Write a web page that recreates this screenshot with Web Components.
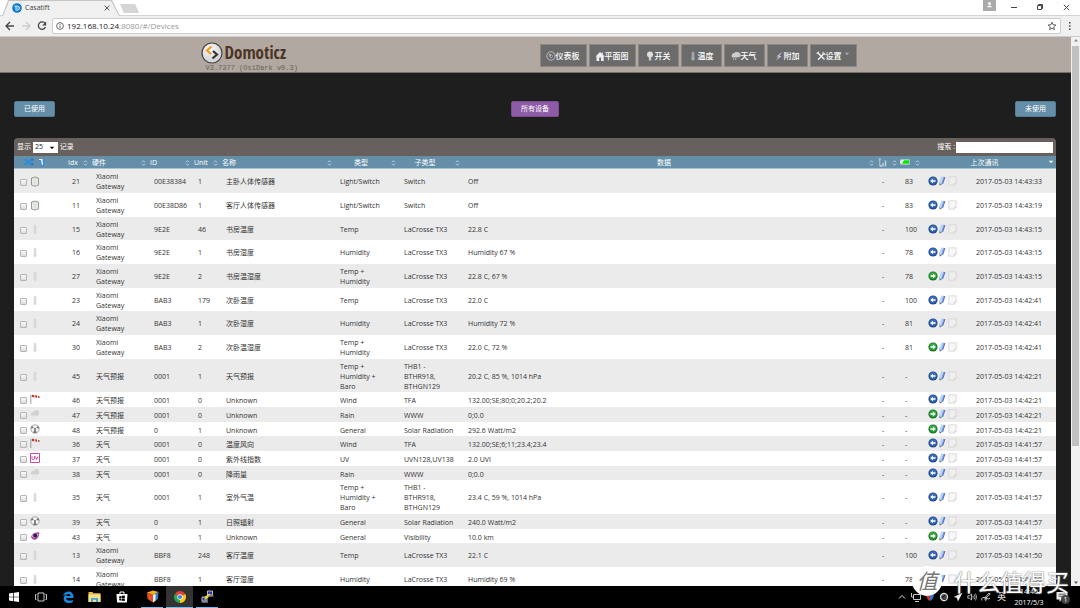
<!DOCTYPE html>
<html lang="zh-CN">
<head>
<meta charset="utf-8">
<title>Casatift</title>
<style>
html,body{margin:0;height:100%;overflow:hidden}
body{background:#1e1e1e;font:7px/10px "Open Sans","Noto Sans CJK SC",sans-serif;color:#333}
</style>
</head>
<body>
<app-desktop></app-desktop>
<script>
const define=(name,markup,init)=>{
  const t=document.createElement('template');
  t.innerHTML=markup;
  customElements.define(name,class extends HTMLElement{
    connectedCallback(){
      if(this.shadowRoot)return;
      this.attachShadow({mode:'open'}).append(t.content.cloneNode(true));
      if(init)init.call(this,this.shadowRoot);
    }
  });
};

/* name: [viewBox, drawing] */
const ICONS={
  favicon:['0 0 10 10','<circle cx="5" cy="5" r="4.8" fill="#0b7bd0"/><path d="M2.5 3.200h3a1.800 1.800 0 0 1 0 3.800H3.4M2.800 5h3" fill="none" stroke="#fff" stroke-width="1"/>'],
  close:['0 0 10 10','<path d="M2 2l6 6M8 2l-6 6" stroke="currentColor" stroke-width="1.1"/>'],
  back:['0 0 12 12','<path d="M10 6H2M6 2L2 6l4 4" fill="none" stroke="currentColor" stroke-width="1.3"/>'],
  fwd:['0 0 12 12','<path d="M2 6h8M6 2l4 4-4 4" fill="none" stroke="currentColor" stroke-width="1.3"/>'],
  reload:['0 0 12 12','<path d="M9 3.400A3.700 3.700 0 1 0 9.500 7" fill="none" stroke="currentColor" stroke-width="1.3"/><path d="M10.200 1.500v4H6.200z" fill="currentColor"/>'],
  info:['0 0 10 10','<circle cx="5" cy="5" r="4.2" fill="none" stroke="currentColor"/><path d="M5 4.4v3M5 2.5v1" stroke="currentColor" stroke-width="1.1"/>'],
  star:['0 0 12 12','<path d="M6 1.4l1.3 3.1 3.4.3-2.6 2.2.8 3.3L6 8.5l-2.9 1.8.8-3.3L1.3 4.8l3.4-.3z" fill="none" stroke="currentColor"/>'],
  dots:['0 0 4 12','<path d="M1 2h1.500v1.500H1zM1 5.200h1.500v1.500H1zM1 8.500h1.500v1.500H1z" fill="currentColor"/>'],
  user:['0 0 13 11','<path d="M0 0h13v11H0z" fill="#aaa"/><circle cx="6.500" cy="3.600" r="1.500" fill="#fff"/><path d="M4.200 7.300Q4.200 5.500 6.500 5.500t2.300 1.800z" fill="#fff"/>'],
  min:['0 0 8 8','<path d="M1 4.500h6" stroke="currentColor"/>'],
  restore:['0 0 8 8','<path d="M1.500 2.500h4v4h-4zM2.500 2.500v-1h4v4h-1" fill="none" stroke="currentColor"/>'],
  logo:['0 0 22 22','<defs><radialGradient id="g" cx=".4" cy=".3"><stop offset="0" stop-color="#fff"/><stop offset="1" stop-color="#d8d8d8"/></radialGradient></defs><circle cx="11" cy="11" r="10" fill="url(#g)" stroke="#444" stroke-width="1.200"/><path d="M10.500 4.500L6 8.500l4 3.500" fill="none" stroke="#f39a1d" stroke-width="2.200"/><path d="M12 9l4 3.500-4.500 4" fill="none" stroke="#333" stroke-width="2.200"/>'],
  gauge:['0 0 10 10','<circle cx="5" cy="5" r="4.200" fill="none" stroke="#bbb"/><circle cx="5" cy="5" r="1.500" fill="none" stroke="#aaa" stroke-width=".8"/><path d="M3 3l2 2" stroke="#ddd" stroke-width=".8"/>'],
  house:['0 0 10 10','<path d="M5 1L.5 5.500h1V10h2.700V6.500h1.800V10h2.700V5.500h1L7.800 3.500V1.500H6.800v1z" fill="#eee"/>'],
  bulb:['0 0 10 10','<circle cx="5" cy="3.600" r="3" fill="#ddd"/><path d="M3.800 6h2.400v3.500H3.800z" fill="#ccc"/>'],
  therm:['0 0 10 10','<path d="M3.800 1.500q1.200-1.500 2.400 0v4.800q1.200 2-.2 3H4q-1.400-1-.2-3z" fill="#aaa" stroke="#999" stroke-width=".5"/>'],
  cloud:['0 0 10 10','<path d="M2 6.500Q-.3 5.500 1 3.700 1.200 2 3.200 2 5 0 7 1.200 9 1 9.400 3.200 10.500 5.500 8 6.300z" fill="#ccc"/><path d="M3 6.500l-.5 2.500M5 6.500L4.500 9" stroke="#aaa" stroke-width="1.200"/>'],
  bolt:['0 0 10 10','<path d="M8.300.8L2.500 5.500h2.200L2 9.500 7.500 5H5.300z" fill="#ccc"/>'],
  tools:['0 0 10 10','<path d="M1.500 1.500l7 7M8.500 2L2 8.700" stroke="#eee" stroke-width="1.500"/><path d="M.6 2.800L3 .6M7 .8v2.500h2.500" fill="none" stroke="#ddd" stroke-width="1.200"/>'],
  caret:['0 0 6 4','<path d="M.8.800h4.400L3 3.200z" fill="currentColor"/>'],
  sort:['0 0 5 6','<path d="M1 2.300L2.500.7 4 2.300M1 3.700l1.500 1.600L4 3.700" fill="none" stroke="#cfe0ea" stroke-width=".8"/>'],
  shuffle:['0 0 10 8','<path d="M0 1.800h2.500L6.500 6H9M0 6h2.500l4-4.200H9" fill="none" stroke="#1f8fe8" stroke-width="1.500"/><path d="M7.500 0L10 1.800 7.500 3.600zM7.500 4.200L10 6 7.500 7.800z" fill="#1778d0"/>'],
  bin:['0 0 8 9','<path d="M1 1.500h6l-.8 7H3.500z" fill="#4388dc"/><path d="M2.500 1h2l.6 6H4z" fill="#e3effa"/><path d="M1 1h2v1H1z" fill="#f4f4f4"/>'],
  bars:['0 0 9 9','<path d="M0 .500h3.500L1.800 2.600zM1.300 1h1v7.500h-1z" fill="#bccad2"/><path d="M2 8h2M5 8.500V5M7.500 8.500V2.500" stroke="#c6d3da" stroke-width="1.500"/>'],
  battery:['0 0 10 6','<path d="M.5.500h9v5h-9V4H0V2h.5z" fill="#dff3df"/><path d="M4 1.200h5v3.600H2z" fill="#0be30b"/>'],
  sensor:['0 0 10 11','<path d="M1.500 2Q5 0 8.500 2v7Q5 11.300 1.500 9z" fill="#e6ece4" stroke="#858585" stroke-width=".8"/><path d="M2.500 2.500q2.500.8 5 0" fill="none" stroke="#ccc" stroke-width=".6"/><path d="M5 4v4" stroke="#c9dcc5"/>'],
  rowtherm:['0 0 10 11','<path d="M4.200 1.500q.8-1 1.600 0v5.300q1.200 1.500-.3 2.700h-1q-1.500-1.200-.3-2.700z" fill="#ddd" stroke="#ccc" stroke-width=".6"/>'],
  wind:['0 0 10 11','<path d="M.8 1v9" stroke="#888" stroke-width=".8"/><path d="M1.500.8l7.500 1v2.400L1.500 3z" fill="#eee"/><path d="M1.800.700l2.400.3v2.200L1.800 3zM5.200 1.300l1.800.3v2.200l-1.800-.3zM8 2l1.500.2v1.700L8 3.700z" fill="#c8322e"/>'],
  rain:['0 0 10 11','<path d="M1.500 6.500Q0 5.500 1.200 4 2 3 3.500 3 5 .500 7 1.200 9.500 1.500 9.300 4.500 9 6.600 7.500 6.700z" fill="#d2d2d2"/><path d="M4 7.500l-1 2M6.500 7.500l-1 2" stroke="#e0e0e0"/>'],
  sun:['0 0 10 11','<circle cx="5" cy="5" r="4.200" fill="#f4f4f4" stroke="#888" stroke-width=".7"/><circle cx="5" cy="5" r=".9" fill="#555"/><path d="M4 4L2 1.800A4.500 4.500 0 0 0 .9 4.500zM6 4l2-2.200a4.500 4.500 0 0 1 1.100 2.700zM4.400 6L3.200 8.700a4 4 0 0 0 3.600 0L5.600 6z" fill="#777"/>'],
  uv:['0 0 10 11','<path d="M.5.500h9v9h-9z" fill="#fff" stroke="#cc4aa8"/><path d="M2 3.200v2.500q.2 1 1.200 1t1.300-1V3.200M5.300 3.500l1.200 3 1.500-3" fill="none" stroke="#bf3d9b" stroke-width=".9"/>'],
  eye:['0 0 10 11','<path d="M1 6Q2 1.500 9.300 1 9.200 7.500 5.500 8.800 2 9 1 6z" fill="#b14bab"/><path d="M1.800 5Q4.500 2 8.500 3 7.500 6 5 6.500 3 6.500 1.800 5z" fill="#d9c9e4"/><circle cx="5.200" cy="4.500" r="2" fill="#2b2250"/>'],
  left:['0 0 10 10','<circle cx="5" cy="5" r="4.600" fill="#234f96"/><circle cx="5" cy="4.600" r="3.300" fill="#3c6cb5"/><path d="M7.500 4.200v1.600H5v1.500L2.200 5 5 2.700v1.500z" fill="#fff"/>'],
  right:['0 0 10 10','<circle cx="5" cy="5" r="4.600" fill="#1c7f28"/><circle cx="5" cy="4.600" r="3.300" fill="#39a844"/><path d="M2.500 4.200v1.600H5v1.500L7.800 5 5 2.700v1.500z" fill="#fff"/>'],
  pencil:['0 0 8 10','<path d="M3.500.800L7 1 4.800 7.500 2 9.500 1.200 7z" fill="#7ea4e4"/><path d="M3.500.800l1.800.1L3 8 1.200 7z" fill="#c4d7f6"/><path d="M7 1L4.800 7.500l-.8.8" fill="none" stroke="#3a5fa8" stroke-width=".8"/><path d="M1.300 7.500l2 1L2 9.600z" fill="#7a6840"/>'],
  note:['0 0 9 10','<path d="M.8.800h7.400v6.500L6.200 9.200H.8z" fill="#f2f2f2" fill-opacity=".6" stroke="#d4d4d4" stroke-width=".8"/><path d="M8.200 7.200h-2v2" fill="none" stroke="#ccc" stroke-width=".6"/>'],
  win:['0 0 10 10','<path d="M0 1.500l4.300-.700v3.900H0zM5 .700L10 0v4.700H5zM0 5.300h4.300v3.900L0 8.500zM5 5.300h5V10l-5-.7z" fill="#fff"/>'],
  taskview:['0 0 12 10','<path d="M3 1h6v8H3zM1.500 2.500h-1v5h1M10.500 2.500h1v5h-1" fill="none" stroke="#ddd" stroke-width=".9"/>'],
  edge:['0 0 12 12','<path d="M.7 5.500C1.500 2 4 .500 6.500.500 10 .500 11.500 3.200 11.500 5.500V7H4.200c.1 3 4 3.400 6.600 1.800v2.400C7 13 1.600 12 1.600 7.700 1.600 5.500 3 4 4.500 3.300 2.800 3.400 1.500 4.300.7 5.500zM4.300 5h4.200C8.500 2.200 4.500 2.300 4.300 5z" fill="#1a86dc"/>'],
  folder:['0 0 13 12','<path d="M.5 1h4l1 1.200h7V11H.5z" fill="#e9b949"/><path d="M.5 3.500h12V11H.5z" fill="#fbe08a"/><path d="M3 11V7h7v4H8V8.800H5V11z" fill="#3ca4dc"/>'],
  store:['0 0 12 12','<path d="M4 3V1h4v2" fill="none" stroke="#fff"/><path d="M.5 3h11l-.6 8.500H1z" fill="#fff"/><path d="M3.200 5.300l2.300-.4V7H3.200zM6 4.800l2.800-.4V7H6zM3.200 7.500h2.300v2.200l-2.300-.4zM6 7.500h2.800V10L6 9.700z" fill="#000"/>'],
  cube:['0 0 13 13','<path d="M1 2.500L7 .500l5.500 1.500L7 5z" fill="#f3b321"/><path d="M1 2.500L7 5v7.500L1.500 9z" fill="#e2501e"/><path d="M7 5l5.500-3-.6 7L7 12.500z" fill="#3b7fc2"/><path d="M7 5l2.500-1.300v7L7 12.500z" fill="#e8f0f4"/>'],
  chrome:['0 0 12 12','<path d="M6 6L.8 3A6 6 0 0 1 11.200 3z" fill="#e2432f"/><path d="M6 6l5.200-3A6 6 0 0 1 6 12z" fill="#fbc718"/><path d="M6 6v6A6 6 0 0 1 .8 3z" fill="#2fa14d"/><circle cx="6" cy="6" r="2.700" fill="#fff"/><circle cx="6" cy="6" r="2.100" fill="#3f82ee"/>'],
  putty:['0 0 13 13','<path d="M6.500 1h5v4h-5zM1 7h5v4H1z" fill="#2b37b0" stroke="#ccc" stroke-width=".9"/><path d="M6 6h6.500M.5 12h6.500" stroke="#bbb" stroke-width="1.200"/><path d="M9 4L4.500 7h2.300L3.500 9.500" fill="none" stroke="#f0e234" stroke-width="1.200"/>'],
  up:['0 0 10 10','<path d="M2 6.500l3-3 3 3" fill="none" stroke="#ddd"/>'],
  net:['0 0 10 10','<path d="M2.500 2.500h7v5h-7zM4 9.500h4M.5 1v4h2" fill="none" stroke="#ddd" stroke-width=".9"/>'],
  shield:['0 0 10 10','<path d="M1 2l4-1v8Q1.500 7.500 1 2z" fill="#d8332a"/><path d="M5 1l4 1q0 5-4 7z" fill="#2f74c8"/>'],
  sync:['0 0 10 10','<circle cx="5" cy="5" r="3.600" fill="#555" stroke="#ddd" stroke-width="1.200"/><path d="M3 5h2l1-2M4 7h3" stroke="#222"/>'],
  plane:['0 0 10 10','<path d="M9.500.8L.8 5l3 .8L5 9.500z" fill="#eee"/>'],
  sound:['0 0 10 10','<path d="M.8 3.800h1.700L4.500 2v6L2.500 6.200H.8z" fill="none" stroke="#ddd" stroke-width=".8"/><path d="M5.800 3.500q1 1.500 0 3M7.200 2.500q1.700 2.500 0 5M8.500 1.500q2.200 3.500 0 7" fill="none" stroke="#ddd" stroke-width=".7"/>'],
  pen:['0 0 10 10','<path d="M1 8.500Q-.2 5.500 3 5.500t2 3Q3 8.500 4.500 5L8 1l1.200 1L5 6q3 2 4 0" fill="none" stroke="#ddd" stroke-width=".9"/>'],
  chat:['0 0 12 12','<path d="M.5 1h11v7.500H5.500L3.500 11V8.500h-3z" fill="#eee"/><path d="M2.500 3.200h7M2.500 5.200h5" stroke="#333" stroke-width=".8"/>'],
  sup:['0 0 8 6','<path d="M2 4.500h4L4 2z" fill="#888"/>'],
  sdown:['0 0 8 6','<path d="M2 1.500h4L4 4z" fill="#555"/>']
};

customElements.define('ui-icon',class extends HTMLElement{
  connectedCallback(){
    if(this.shadowRoot)return;
    const [box,art]=ICONS[this.getAttribute('name')];
    const [,,w,h]=box.split(' ');
    this.attachShadow({mode:'open'}).innerHTML=
      `<style>:host{display:inline-block;flex:none;width:${w}px;height:${h}px;vertical-align:top;white-space:normal}svg{display:block;width:100%;height:100%}</style><svg viewBox="${box}" aria-hidden="true">${art}</svg>`;
  }
});

define('browser-bar',`<style>
:host{display:block;background:#f0f0f0;color:#444;flex:none}
*{box-sizing:border-box}
.tabs{display:flex;height:16px;background:#fff;border-bottom:1px solid #d4d4d4}
.tab{width:120px;height:16px;background:#c4c4c4;clip-path:polygon(8px 0,112px 0,120px 100%,2px 100%)}
.in{display:flex;align-items:center;height:16px;padding:0 9px 0 12px;background:#f0f0f0;clip-path:polygon(9px 1px,111px 1px,119px 100%,3px 100%)}
.in span{flex:1;padding-left:3px}
button{border:0;background:none;padding:0;margin:0;color:inherit;display:flex}
.in ui-icon[name=close]{width:8px;height:8px}
.new{width:19px;height:9px;margin-top:4px;background:#d5d5d5;clip-path:polygon(0 0,80% 0,100% 100%,20% 100%)}
.win{margin-left:auto;display:flex;align-items:flex-start;padding-right:9px;gap:18px}
.win button{padding-top:3px}
.win button:first-child{padding:0;margin-right:-4px}
.win ui-icon[name=close]{width:9px;height:9px}
.bar{display:flex;align-items:center;height:21px;padding:0 8px 0 4px;border-bottom:1px solid #ccc}
.bar>button{margin-right:4px}
.bar>button:last-child{margin:0 0 0 7px}
.addr{flex:1;display:flex;align-items:center;height:16px;border:1px solid #ccc;background:#fff;padding:0 3px;border-radius:2px}
.addr p{margin:0 0 0 3px;flex:1;font-size:8px;line-height:14px;color:#999}
.addr b{font-weight:400;color:#222}
[name=info]{width:8px;height:8px}.addr [name=star]{width:10px;height:10px}
</style>
<div class="tabs"><div class="tab"><div class="in"><ui-icon name="favicon"></ui-icon><span>Casatift</span><button aria-label="Close tab"><ui-icon name="close"></ui-icon></button></div></div><div class="new"></div>
<div class="win"><button aria-label="User"><ui-icon name="user"></ui-icon></button><button aria-label="Minimize"><ui-icon name="min"></ui-icon></button><button aria-label="Restore"><ui-icon name="restore"></ui-icon></button><button aria-label="Close"><ui-icon name="close"></ui-icon></button></div></div>
<div class="bar"><button aria-label="Back"><ui-icon name="back"></ui-icon></button><button aria-label="Forward" style="color:#ccc"><ui-icon name="fwd"></ui-icon></button><button aria-label="Reload"><ui-icon name="reload"></ui-icon></button>
<div class="addr"><ui-icon name="info"></ui-icon><p><b>192.168.10.24</b>:8080/#/Devices</p><ui-icon name="star"></ui-icon></div><button aria-label="Menu"><ui-icon name="dots"></ui-icon></button></div>`);

define('nav-item',`<style>
:host{display:block}
a{display:flex;align-items:center;justify-content:center;box-sizing:border-box;min-width:41px;height:23px;padding:0 6px 0 5px;background:#6b6b6b;border:1px solid #8d8781;color:#fff;font-size:8px;line-height:12px;font-weight:500;text-decoration:none;white-space:nowrap}
</style><a href="#"><slot></slot></a>`,function(root){
  const a=root.querySelector('a');
  const icon=name=>{const i=document.createElement('ui-icon');i.setAttribute('name',name);return i};
  a.prepend(icon(this.getAttribute('icon')));
  if(this.hasAttribute('menu')){
    const c=icon('caret');c.style.cssText='margin:0 0 3px 2px;color:#aaa';
    a.append(c);
  }
});

define('site-header',`<style>
:host{display:block;background:#b0a8a1;border-bottom:1px solid #777069;flex:none}
.in{display:flex;justify-content:space-between;max-width:670px;height:35px;margin:0 auto}
.brand{display:grid;grid-template-columns:24px auto;align-content:start;padding-top:5px;color:#4b3422}
.brand b{font:bold 17px/22px "Liberation Sans Narrow","Open Sans Condensed","DejaVu Sans Condensed",sans-serif}
.brand small{grid-column:1/-1;padding-left:5px;font:7px/8px "Liberation Mono",monospace;color:#6a635c}
nav{display:flex;gap:2px;padding:7px 14px 0 0}
</style>
<div class="in"><div class="brand"><ui-icon name="logo"></ui-icon><b>Domoticz</b><small>V3.7377 (OsiDark v0.3)</small></div>
<nav><nav-item icon="gauge">仪表板</nav-item><nav-item icon="house">平面图</nav-item><nav-item icon="bulb">开关</nav-item><nav-item icon="therm">温度</nav-item><nav-item icon="cloud">天气</nav-item><nav-item icon="bolt">附加</nav-item><nav-item icon="tools" menu>设置</nav-item></nav></div>`);

define('filter-button',`<style>
:host{display:block}
button{display:block;height:16px;padding:0 9px;border:1px solid #557d95;border-radius:2px;background:#658ea8;color:#fff;font:inherit;line-height:14px}
:host([current]) button{background:#8e5ca6;border-color:#7a4c90}
</style><button type="button"><slot></slot></button>`);

const X='Xiaomi\nGateway',TH='Temp +\nHumidity',THB='Temp +\nHumidity +\nBaro',B='THB1 -\nBTHR918,\nBTHGN129',L='LaCrosse TX3',Y='天气预报',T='天气';
/* icon, idx, hardware, id, unit, name, type, subtype, data, battery, action, last seen */
const ROWS=[
['sensor',21,X,'00E38384',1,'主卧人体传感器','Light/Switch','Switch','Off',83,'left','14:43:33'],
['sensor',11,X,'00E38D86',1,'客厅人体传感器','Light/Switch','Switch','Off',83,'left','14:43:19'],
['rowtherm',15,X,'9E2E',46,'书房温度','Temp',L,'22.8 C',100,'left','14:43:15'],
['rowtherm',16,X,'9E2E',1,'书房湿度','Humidity',L,'Humidity 67 %',78,'left','14:43:15'],
['rowtherm',27,X,'9E2E',2,'书房温湿度',TH,L,'22.8 C, 67 %',78,'right','14:43:15'],
['rowtherm',23,X,'BAB3',179,'次卧温度','Temp',L,'22.0 C',100,'left','14:42:41'],
['rowtherm',24,X,'BAB3',1,'次卧湿度','Humidity',L,'Humidity 72 %',81,'left','14:42:41'],
['rowtherm',30,X,'BAB3',2,'次卧温湿度',TH,L,'22.0 C, 72 %',81,'right','14:42:41'],
['rowtherm',45,Y,'0001',1,Y,THB,B,'20.2 C, 85 %, 1014 hPa','-','left','14:42:21'],
['wind',46,Y,'0001',0,'Unknown','Wind','TFA','132.00;SE;80;0;20.2;20.2','-','left','14:42:21'],
['rain',47,Y,'0001',0,'Unknown','Rain','WWW','0;0.0','-','right','14:42:21'],
['sun',48,Y,'0',1,'Unknown','General','Solar Radiation','292.6 Watt/m2','-','right','14:42:21'],
['wind',36,T,'0001',0,'温度风向','Wind','TFA','132.00;SE;6;11;23.4;23.4','-','left','14:41:57'],
['uv',37,T,'0001',0,'紫外线指数','UV','UVN128,UV138','2.0 UVI','-','left','14:41:57'],
['rain',38,T,'0001',0,'降雨量','Rain','WWW','0;0.0','-','left','14:41:57'],
['rowtherm',35,T,'0001',1,'室外气温',THB,B,'23.4 C, 59 %, 1014 hPa','-','left','14:41:57'],
['sun',39,T,'0',1,'日照辐射','General','Solar Radiation','240.0 Watt/m2','-','left','14:41:57'],
['eye',43,T,'0',1,'Unknown','General','Visibility','10.0 km','-','right','14:41:57'],
['rowtherm',13,X,'BBF8',248,'客厅温度','Temp',L,'22.1 C',100,'left','14:41:50'],
['rowtherm',14,X,'BBF8',1,'客厅湿度','Humidity',L,'Humidity 69 %',78,'left','14:41:50']];

define('device-table',`<style>
:host{display:block;border-radius:4px 4px 0 0;overflow:hidden}
*{box-sizing:border-box}
.top{display:flex;align-items:center;height:18px;padding:0 3px;background:#67605c;color:#fff}
.top label{display:flex;align-items:center;gap:1px}
.top label:last-child{margin-left:auto}
select{appearance:none;width:25px;height:11px;padding:0 2px;border:0;border-radius:0;background:#fff;font:inherit;color:#222}
.sel{position:relative;display:flex;margin-left:2px}
.sel ui-icon{position:absolute;right:3px;top:4px;color:#111;pointer-events:none}
.top input{width:97px;height:11px;border:0;padding:0 2px;font:inherit}
table{width:100%;table-layout:fixed;border-collapse:separate;border-spacing:0}
th{height:13px;padding:1px 9px 0 3px;background:#658ea8;border-bottom:1px solid #a9c4d5;color:#fff;font-weight:400;text-align:left;white-space:nowrap;position:relative;vertical-align:middle}
th.c{text-align:center;padding:1px 8px 0 0}
th>ui-icon{vertical-align:middle}
th .s{position:absolute;right:1px;top:4px}
th ui-icon[name=caret]{right:2px}
.pair{display:flex;gap:4px;padding:0 0 1px 7px}
.bat{display:flex;margin-left:-1px;padding-bottom:1px}
.bat ui-icon{width:10px}
td{padding:3px 0 1px 7px;background:#fff;white-space:pre-line;vertical-align:middle}
tr:nth-child(odd) td{background:#ebebeb}
tr:nth-child(3n) td{padding-bottom:0}
.ic{display:flex;align-items:center;height:11px}
.dev{gap:3px;margin-left:-1px}
.dev ui-icon{margin-top:-2px}
.act ui-icon{margin-top:-3px}
.act ui-icon:last-child{margin-left:2px}
input[type=checkbox]{appearance:none;width:7px;height:7px;margin:0;border:1px solid #b5b5b5;border-radius:1px;background:linear-gradient(#fafafa,#dcdcdc)}
</style>
<div class="top"><label for="len">显示</label><span class="sel"><select id="len"><option>25</option></select><ui-icon name="caret"></ui-icon></span><label for="len">&nbsp;记录</label><label>搜索 :<input type="text"></label></div>
<table><colgroup><col style="width:51px"><col style="width:24px"><col style="width:58px"><col style="width:44px"><col style="width:28px"><col style="width:114px"><col style="width:64px"><col style="width:64px"><col><col style="width:23px"><col style="width:23px"><col style="width:48px"><col style="width:87px"></colgroup>
<thead><tr><th><div class="pair"><ui-icon name="shuffle"></ui-icon><ui-icon name="bin"></ui-icon></div></th><th class="c">Idx<ui-icon class="s" name="sort"></ui-icon></th><th>硬件<ui-icon class="s" name="sort"></ui-icon></th><th>ID<ui-icon class="s" name="sort"></ui-icon></th><th>Unit<ui-icon class="s" name="sort"></ui-icon></th><th>名称<ui-icon class="s" name="sort"></ui-icon></th><th class="c">类型<ui-icon class="s" name="sort"></ui-icon></th><th class="c">子类型<ui-icon class="s" name="sort"></ui-icon></th><th class="c">数据<ui-icon class="s" name="sort"></ui-icon></th><th><ui-icon name="bars"></ui-icon><ui-icon class="s" name="sort"></ui-icon></th><th><div class="bat"><ui-icon name="battery"></ui-icon></div><ui-icon class="s" name="sort"></ui-icon></th><th class="c" colspan="2">上次通讯<ui-icon class="s" name="caret"></ui-icon></th></tr></thead><tbody></tbody></table>`,function(root){
  root.querySelector('tbody').innerHTML=ROWS.map(r=>`<tr><td><div class="ic dev"><input type="checkbox" aria-label="${r[1]}"><ui-icon name="${r[0]}"></ui-icon></div></td>${r.slice(1,9).map(v=>`<td>${v}</td>`).join('')}<td>-</td><td>${r[9]}</td><td><div class="ic act"><ui-icon name="${r[10]}"></ui-icon><ui-icon name="pencil"></ui-icon><ui-icon name="note"></ui-icon></div></td><td>2017-05-03 ${r[11]}</td></tr>`).join('');
});

define('task-bar',`<style>
:host{display:flex;align-items:stretch;height:22px;background:#000;color:#fff;flex:none}
button{display:flex;align-items:center;justify-content:center;width:27px;padding:0;border:0;border-bottom:1px solid transparent;background:none}
.apps{display:flex;gap:3px;margin-left:6px}
.apps button{width:22px;border-bottom-color:#76b9ed}
.apps .on{width:27px;background:#333}
.tray{margin-left:auto;display:flex;align-items:center;gap:4px;padding-right:12px}
.ime{font-size:9px;padding:0 2px}
time{text-align:center;line-height:11px;width:34px;white-space:nowrap}
.n{position:relative;display:flex;margin-left:6px}
.n b{position:absolute;left:5px;top:4px;width:9px;height:9px;border-radius:50%;background:#444;font-weight:400;line-height:9px;text-align:center}
</style>
<button aria-label="Start"><ui-icon name="win"></ui-icon></button><button aria-label="Task view"><ui-icon name="taskview"></ui-icon></button><button aria-label="Edge"><ui-icon name="edge"></ui-icon></button><button aria-label="Files"><ui-icon name="folder"></ui-icon></button><button aria-label="Store"><ui-icon name="store"></ui-icon></button><div class="apps"><button aria-label="Cube"><ui-icon name="cube"></ui-icon></button><button class="on" aria-label="Chrome"><ui-icon name="chrome"></ui-icon></button><button aria-label="PuTTY"><ui-icon name="putty"></ui-icon></button></div>
<div class="tray"><ui-icon name="up"></ui-icon><ui-icon name="net"></ui-icon><ui-icon name="shield"></ui-icon><ui-icon name="sync"></ui-icon><ui-icon name="plane"></ui-icon><ui-icon name="sound"></ui-icon><ui-icon name="pen"></ui-icon><span class="ime">英</span><time>14:46<br>2017/5/3</time><span class="n"><ui-icon name="chat"></ui-icon><b>1</b></span></div>`);

define('water-mark',`<style>
:host{position:absolute;right:11px;bottom:12px;display:flex;align-items:center;gap:12px;pointer-events:none;color:#fff;font:23px/30px "Noto Sans CJK SC",sans-serif;text-shadow:0 0 1px #666,0 0 2px #999}
i{width:30px;height:30px;border-radius:50%;background:#fff;color:#777;text-align:center;font-size:21px;font-style:italic;line-height:28px;text-shadow:none}
</style><i>值</i><span>什么值得买</span>`);

define('app-desktop',`<style>
:host{display:flex;flex-direction:column;height:100vh;position:relative}
.view{flex:1;min-height:0;display:flex}
.page{flex:1;min-width:0;overflow:hidden;background:#1e1e1e}
main{padding:28px 15px 0 14px}
.filters{display:flex;justify-content:space-between;margin-bottom:21px}
.scroll{width:9px;flex:none;background:#f1f1f1;display:flex;flex-direction:column;align-items:center}
.thumb{width:7px;flex:397;background:#c1c1c1;margin-top:3px}
.rest{flex:133}
</style>
<browser-bar></browser-bar>
<div class="view"><div class="page"><site-header></site-header><main><div class="filters"><filter-button>已使用</filter-button><filter-button current>所有设备</filter-button><filter-button>未使用</filter-button></div><device-table></device-table></main></div>
<div class="scroll"><ui-icon name="sup"></ui-icon><div class="thumb"></div><div class="rest"></div><ui-icon name="sdown"></ui-icon></div></div>
<task-bar></task-bar><water-mark></water-mark>`);
</script>
</body>
</html>
